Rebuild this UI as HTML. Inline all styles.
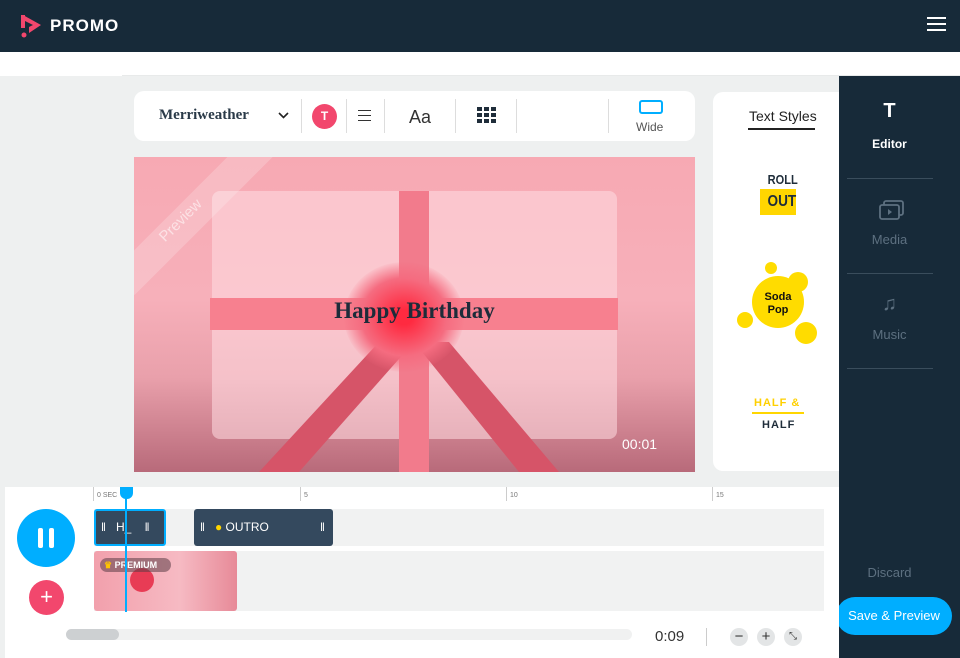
<!DOCTYPE html>
<html><head><meta charset="utf-8"><style>
*{margin:0;padding:0;box-sizing:border-box}
body{width:960px;height:658px;overflow:hidden;background:#eef0f0;font-family:"Liberation Sans",sans-serif;position:relative}
.a{position:absolute}
</style></head><body>
<div class="a" style="left:0;top:0;width:960px;height:52px;background:#172a39"></div>
<svg class="a" style="left:20px;top:13px" width="24" height="26" viewBox="0 0 24 26"><path d="M3 2 L21 12 L9 20 L9 14 L13 12 L3 7 Z" fill="#f2476d"/><path d="M3 2 L3 15" stroke="#f2476d" stroke-width="4"/><circle cx="4" cy="22" r="2.5" fill="#f2476d"/></svg>
<div class="a" style="left:50px;top:16px;color:#fff;font-size:17px;font-weight:bold;letter-spacing:1px">PROMO</div>
<div class="a" style="left:927px;top:17px;width:19px;height:2px;background:#fff;box-shadow:0 6px 0 #fff,0 12px 0 #fff"></div>
<div class="a" style="left:0;top:52px;width:960px;height:24px;background:#fff"></div>
<div class="a" style="left:122px;top:75px;width:838px;height:1px;background:#e8eaea"></div>

<div class="a" style="left:134px;top:91px;width:561px;height:50px;background:#fff;border-radius:10px"></div>
<div class="a" style="left:159px;top:107px;font-family:'Liberation Serif',serif;font-weight:bold;font-size:15px;color:#2a3a48">Merriweather</div>
<svg class="a" style="left:278px;top:112px" width="11" height="7"><path d="M1 1 L5.5 5.5 L10 1" stroke="#222" stroke-width="1.6" fill="none"/></svg>
<div class="a" style="left:301px;top:99px;width:1px;height:34px;background:#ddd"></div>
<div class="a" style="left:312px;top:104px;width:25px;height:25px;border-radius:50%;background:#f2476d;color:#fff;font-size:12px;font-weight:bold;text-align:center;line-height:25px">T</div>
<div class="a" style="left:346px;top:99px;width:1px;height:34px;background:#ddd"></div>
<div class="a" style="left:358px;top:110px;width:13px;height:1px;background:#333;box-shadow:0 5px 0 #333,0 10px 0 #333"></div>
<div class="a" style="left:384px;top:99px;width:1px;height:34px;background:#ddd"></div>
<div class="a" style="left:409px;top:107px;font-size:18px;color:#333">Aa</div>
<div class="a" style="left:455px;top:99px;width:1px;height:34px;background:#ddd"></div>
<svg class="a" style="left:477px;top:107px" width="19" height="17"><g fill="#1f2d3a"><rect x="0" y="0" width="5" height="4"/><rect x="7" y="0" width="5" height="4"/><rect x="14" y="0" width="5" height="4"/><rect x="0" y="6" width="5" height="4"/><rect x="7" y="6" width="5" height="4"/><rect x="14" y="6" width="5" height="4"/><rect x="0" y="12" width="5" height="4"/><rect x="7" y="12" width="5" height="4"/><rect x="14" y="12" width="5" height="4"/></g></svg>
<div class="a" style="left:516px;top:99px;width:1px;height:34px;background:#ddd"></div>
<div class="a" style="left:608px;top:99px;width:1px;height:34px;background:#ddd"></div>
<div class="a" style="left:639px;top:100px;width:24px;height:14px;border:2px solid #00aeff;border-radius:3px"></div>
<div class="a" style="left:636px;top:120px;font-size:12px;color:#555">Wide</div>

<div class="a" style="left:134px;top:157px;width:561px;height:315px;background:linear-gradient(#f7a9b3 0%,#f7b0ba 45%,#e9a0ab 70%,#b86a7a 100%);overflow:hidden">
 <div class="a" style="left:78px;top:34px;width:405px;height:248px;background:rgba(255,220,226,.55);border-radius:8px"></div>
 <div class="a" style="left:265px;top:34px;width:30px;height:281px;background:#f27b8c"></div>
 <svg class="a" style="left:0;top:0" width="561" height="315"><polygon points="245,185 280,185 165,315 125,315" fill="#d65468"/><polygon points="280,185 315,185 425,315 385,315" fill="#d65468"/></svg>
 <div class="a" style="left:76px;top:141px;width:408px;height:32px;background:#f7808f"></div>
 <div class="a" style="left:210px;top:105px;width:120px;height:110px;border-radius:50%;background:radial-gradient(#ff2a40 10%,#f56c80 50%,rgba(245,130,150,0) 72%)"></div>
 <div class="a" style="left:-40px;top:40px;width:200px;height:32px;background:rgba(255,255,255,.2);transform:rotate(-45deg)"></div>
 <div class="a" style="left:20px;top:55px;font-size:15px;color:rgba(255,255,255,.55);transform:rotate(-45deg)">Preview</div>
 <div class="a" style="left:0;top:141px;width:561px;text-align:center;font-family:'Liberation Serif',serif;font-weight:bold;font-size:23px;color:#1d2c3a">Happy Birthday</div>
 <div class="a" style="left:488px;top:279px;font-size:14px;color:#fff">00:01</div>
</div>

<div class="a" style="left:713px;top:92px;width:140px;height:379px;background:#fff;border-radius:10px"></div>
<div class="a" style="left:749px;top:108px;font-size:14px;color:#222">Text Styles</div>
<div class="a" style="left:748px;top:128px;width:67px;height:2px;background:#222"></div>
<div class="a" style="left:765px;top:172px;font-size:13px;font-weight:bold;color:#1f2d3a;transform:scaleX(.85)">ROLL</div>
<div class="a" style="left:760px;top:189px;width:36px;height:26px;background:#ffd600"></div>
<div class="a" style="left:765px;top:193px;font-size:16px;font-weight:bold;color:#1f2d3a;transform:scaleX(.85)">OUT</div>
<div class="a" style="left:752px;top:276px;width:52px;height:52px;border-radius:50%;background:#ffdc00"></div>
<div class="a" style="left:765px;top:262px;width:12px;height:12px;border-radius:50%;background:#ffdc00"></div>
<div class="a" style="left:788px;top:272px;width:20px;height:20px;border-radius:50%;background:#ffdc00"></div>
<div class="a" style="left:737px;top:312px;width:16px;height:16px;border-radius:50%;background:#ffdc00"></div>
<div class="a" style="left:795px;top:322px;width:22px;height:22px;border-radius:50%;background:#ffdc00"></div>
<div class="a" style="left:758px;top:291px;width:40px;text-align:center;font-size:11px;font-weight:bold;line-height:13px;color:#111">Soda<br>Pop</div>
<div class="a" style="left:754px;top:397px;font-size:11px;font-weight:bold;color:#ffd000;letter-spacing:1px">HALF &amp;</div>
<div class="a" style="left:752px;top:412px;width:52px;height:2px;background:#ffd600"></div>
<div class="a" style="left:762px;top:419px;font-size:11px;font-weight:bold;color:#1f2d3a;letter-spacing:1px">HALF</div>

<div class="a" style="left:839px;top:76px;width:121px;height:582px;background:#172a39"></div>
<div class="a" style="left:839px;top:100px;width:101px;text-align:center;color:#fff;font-size:20px;font-weight:bold">T</div>
<div class="a" style="left:839px;top:137px;width:101px;text-align:center;color:#fff;font-size:12px;font-weight:bold">Editor</div>
<div class="a" style="left:847px;top:178px;width:86px;height:1px;background:#3a4d5c"></div>
<svg class="a" style="left:879px;top:199px" width="26" height="22"><rect x="5" y="2" width="19" height="14" rx="2" fill="none" stroke="#5d7080" stroke-width="1.8"/><rect x="1" y="6" width="19" height="14" rx="2" fill="#172a39" stroke="#5d7080" stroke-width="1.8"/><path d="M9 10 L13 13 L9 16 Z" fill="#5d7080"/></svg>
<div class="a" style="left:839px;top:232px;width:101px;text-align:center;color:#5d7080;font-size:13px">Media</div>
<div class="a" style="left:847px;top:273px;width:86px;height:1px;background:#3a4d5c"></div>
<div class="a" style="left:839px;top:293px;width:101px;text-align:center;color:#5d7080;font-size:20px">♫</div>
<div class="a" style="left:839px;top:327px;width:101px;text-align:center;color:#5d7080;font-size:13px">Music</div>
<div class="a" style="left:847px;top:368px;width:86px;height:1px;background:#3a4d5c"></div>
<div class="a" style="left:839px;top:565px;width:101px;text-align:center;color:#5d7080;font-size:13px">Discard</div>
<div class="a" style="left:836px;top:597px;width:116px;height:38px;border-radius:19px;background:#00aeff;color:#fff;font-size:13px;text-align:center;line-height:38px">Save &amp; Preview</div>

<div class="a" style="left:5px;top:487px;width:834px;height:171px;background:#fff"></div>
<div class="a" style="left:93px;top:487px;width:1px;height:14px;background:#ccc"></div>
<div class="a" style="left:97px;top:492px;font-size:7px;color:#777">0 SEC</div>
<div class="a" style="left:300px;top:487px;width:1px;height:14px;background:#ccc"></div><div class="a" style="left:304px;top:492px;font-size:7px;color:#777">5</div>
<div class="a" style="left:506px;top:487px;width:1px;height:14px;background:#ccc"></div><div class="a" style="left:510px;top:492px;font-size:7px;color:#777">10</div>
<div class="a" style="left:712px;top:487px;width:1px;height:14px;background:#ccc"></div><div class="a" style="left:716px;top:492px;font-size:7px;color:#777">15</div>
<div class="a" style="left:94px;top:509px;width:730px;height:37px;background:#f1f2f2"></div>
<div class="a" style="left:94px;top:551px;width:730px;height:60px;background:#f1f2f2"></div>
<div class="a" style="left:94px;top:509px;width:72px;height:37px;background:#34495e;border:2px solid #00aeff;border-radius:3px;color:#fff;font-size:12px;line-height:33px;padding-left:5px">‖ &nbsp;&nbsp;H_ &nbsp;&nbsp;&nbsp;‖</div>
<div class="a" style="left:194px;top:509px;width:139px;height:37px;background:#34495e;border-radius:3px;color:#fff;font-size:12px;line-height:37px;padding-left:6px">‖ &nbsp;&nbsp;<span style="color:#ffd600">●</span> OUTRO</div>
<div class="a" style="left:320px;top:509px;color:#fff;font-size:12px;line-height:37px">‖</div>
<div class="a" style="left:94px;top:551px;width:143px;height:60px;background:linear-gradient(90deg,#f2a0ac,#f6bac3 60%,#e78a98);border-radius:3px"></div>
<div class="a" style="left:130px;top:568px;width:24px;height:24px;border-radius:50%;background:#e83c55"></div>
<div class="a" style="left:100px;top:558px;width:71px;height:14px;border-radius:7px;background:rgba(90,60,70,.55);color:#fff;font-size:9px;font-weight:bold;line-height:14px;padding-left:4px"><span style="color:#ffc400">♛</span> PREMIUM</div>
<div class="a" style="left:125px;top:495px;width:2px;height:117px;background:#00aeff"></div>
<div class="a" style="left:120px;top:487px;width:13px;height:12px;background:#00aeff;border-radius:0 0 6px 6px"></div>
<div class="a" style="left:17px;top:509px;width:58px;height:58px;border-radius:50%;background:#00aeff"></div>
<div class="a" style="left:38px;top:528px;width:5px;height:20px;background:#fff;border-radius:2px"></div>
<div class="a" style="left:49px;top:528px;width:5px;height:20px;background:#fff;border-radius:2px"></div>
<div class="a" style="left:29px;top:580px;width:35px;height:35px;border-radius:50%;background:#f2476d;color:#fff;font-size:22px;text-align:center;line-height:34px">+</div>
<div class="a" style="left:66px;top:629px;width:566px;height:11px;border-radius:6px;background:#f0f1f1"></div>
<div class="a" style="left:66px;top:629px;width:53px;height:11px;border-radius:6px;background:#cdd0d2"></div>
<div class="a" style="left:655px;top:628px;font-size:15px;color:#333">0:09</div>
<div class="a" style="left:706px;top:628px;width:1px;height:18px;background:#ccc"></div>
<div class="a" style="left:730px;top:628px;width:18px;height:18px;border-radius:50%;background:#e3e5e6;text-align:center;font-size:15px;line-height:17px;color:#333">−</div>
<div class="a" style="left:757px;top:628px;width:18px;height:18px;border-radius:50%;background:#e3e5e6;text-align:center;font-size:15px;line-height:17px;color:#333">+</div>
<div class="a" style="left:784px;top:628px;width:18px;height:18px;border-radius:50%;background:#e3e5e6;text-align:center;font-size:10px;line-height:18px;color:#333">⤡</div>
</body></html>
